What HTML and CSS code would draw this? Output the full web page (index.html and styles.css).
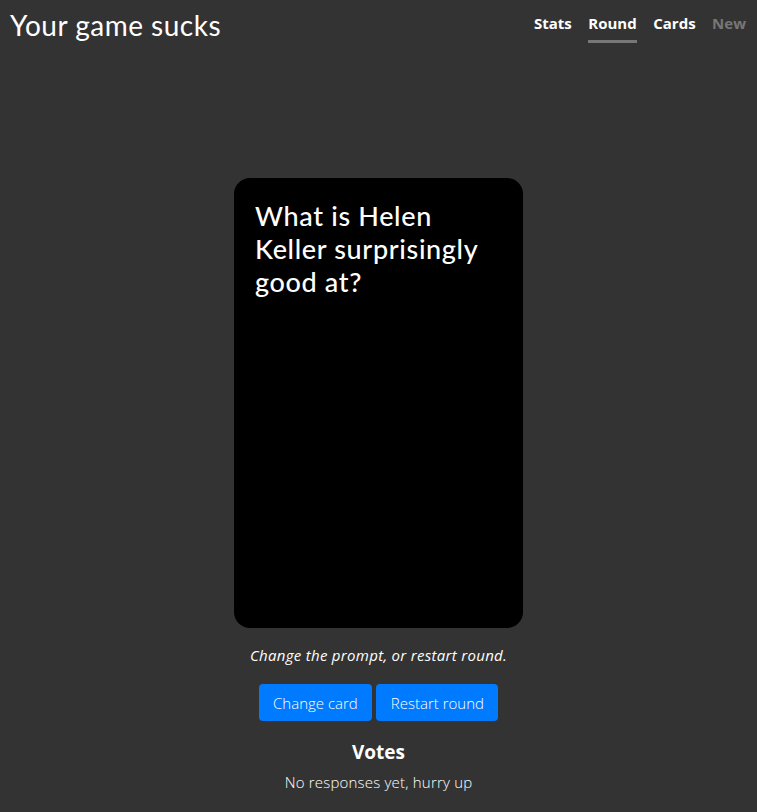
FILE: index.html
```html
<!DOCTYPE html>
<html lang="en">
<head>
<meta charset="utf-8">
<title>Your game sucks</title>
<link rel="stylesheet" href="styles.css">
</head>
<body>
<header class="topbar">
  <h1 class="title">Your game sucks</h1>
  <nav class="nav">
    <a class="nav-link">Stats</a>
    <a class="nav-link active">Round</a>
    <a class="nav-link">Cards</a>
    <a class="nav-link muted">New</a>
  </nav>
</header>
<main class="main">
  <div class="card">
    <p class="prompt">What is Helen Keller surprisingly good at?</p>
  </div>
  <p class="hint">Change the prompt, or restart round.</p>
  <div class="actions">
    <button class="btn">Change card</button>
    <button class="btn">Restart round</button>
  </div>
  <h2 class="votes">Votes</h2>
  <p class="empty">No responses yet, hurry up</p>
</main>
</body>
</html>
```
FILE: styles.css
```css
html, body {
  margin: 0;
  padding: 0;
  background: #333333;
  color: #ffffff;
  font-family: "Open Sans", "Noto Sans", sans-serif;
}
.topbar {
  display: flex;
  justify-content: space-between;
  align-items: flex-start;
  padding: 0 11px 0 10px;
  height: 50px;
}
.title {
  margin: 8px 0 0 0;
  font-family: Lato, sans-serif;
  font-weight: 400;
  font-size: 28px;
  letter-spacing: 0.5px;
  line-height: 34px;
}
.nav {
  display: flex;
  gap: 16.5px;
  padding-top: 12px;
}
.nav-link {
  font-size: 15px;
  font-weight: 700;
  line-height: 22px;
  color: #ffffff;
  padding-bottom: 6px;
  border-bottom: 3px solid transparent;
}
.nav-link.active {
  border-bottom-color: #777777;
}
.nav-link.muted {
  color: #777777;
}
.main {
  display: flex;
  flex-direction: column;
  align-items: center;
  padding-top: 128px;
}
.card {
  box-sizing: border-box;
  width: 289px;
  height: 450px;
  background: #000000;
  border-radius: 16px;
  padding: 21px 28px 21px 21px;
}
.prompt {
  margin: 0;
  font-family: Lato, sans-serif;
  font-size: 27px;
  line-height: 33px;
  font-weight: 500;
  letter-spacing: 0.65px;
}
.hint {
  margin: 16px 0 0 0;
  font-style: italic;
  font-size: 15px;
  line-height: 22px;
  letter-spacing: 0.3px;
}
.actions {
  display: flex;
  gap: 4px;
  margin-top: 18px;
}
.btn {
  background: #007bff;
  color: #ffffff;
  border: none;
  border-radius: 4px;
  height: 37px;
  padding: 0 14.5px;
  font-family: "Open Sans", sans-serif;
  font-weight: 300;
  font-size: 15px;
}
.votes {
  margin: 18px 0 0 0;
  font-size: 19px;
  font-weight: 700;
  line-height: 26px;
}
.empty {
  margin: 6px 0 0 0;
  font-size: 15px;
  font-weight: 300;
  line-height: 22px;
  letter-spacing: 0.2px;
}
```
